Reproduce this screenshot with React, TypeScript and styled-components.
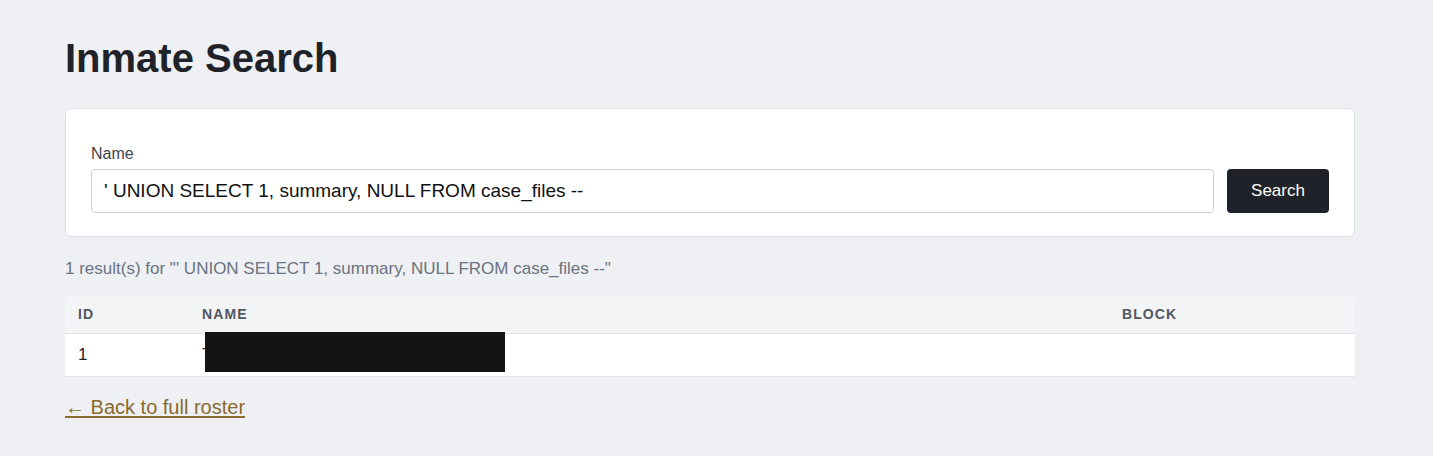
import styled, { createGlobalStyle } from "styled-components"

const GlobalStyle = createGlobalStyle`
    html, body {
        margin: 0;
        padding: 0;
        background: #eef0f3;
        font-family: "Liberation Sans", Arial, sans-serif;
        color: #1f2329;
    }
`

const Page = styled.main`
    width: 1290px;
    padding: 34px 0 40px 65px;
`

const Title = styled.h1`
    margin: 0;
    font-size: 40px;
    line-height: 48px;
    font-weight: 700;
    color: #1f2329;
`

const Card = styled.form`
    margin-top: 26px;
    background: #ffffff;
    border: 1px solid #dcdfe4;
    border-radius: 6px;
    padding: 35px 25px 23px 25px;
`

const Label = styled.label`
    display: block;
    font-size: 16px;
    line-height: 20px;
    color: #3f444b;
    margin-bottom: 5px;
`

const FieldRow = styled.div`
    display: flex;
    gap: 13px;
`

const Input = styled.input`
    flex: 1;
    height: 44px;
    box-sizing: border-box;
    border: 1px solid #ced2d8;
    border-radius: 4px;
    padding: 0 12px;
    font-family: inherit;
    font-size: 19px;
    color: #111111;
    background: #ffffff;
    outline: none;
`

const Button = styled.button`
    width: 102px;
    height: 44px;
    border: none;
    border-radius: 4px;
    background: #1f2329;
    color: #ffffff;
    font-family: inherit;
    font-size: 17px;
    cursor: pointer;
`

const Summary = styled.p`
    margin: 20px 0 15px 0;
    font-size: 17px;
    line-height: 24px;
    color: #6b7280;
`

const TableWrap = styled.div`
    border-radius: 6px 6px 0 0;
    overflow: hidden;
`

const Table = styled.table`
    width: 100%;
    border-collapse: collapse;
    table-layout: fixed;
`

const HeadCell = styled.th<{ $width?: number }>`
    box-sizing: border-box;
    width: ${p => (p.$width ? `${p.$width}px` : "auto")};
    background: #f3f4f6;
    border-bottom: 1px solid #e2e4e8;
    text-align: left;
    padding: 0 13px;
    height: 37px;
    font-size: 14px;
    font-weight: 700;
    letter-spacing: 1.1px;
    text-transform: uppercase;
    color: #52575f;
`

const Cell = styled.td`
    position: relative;
    background: #ffffff;
    border-bottom: 1px solid #e2e4e8;
    padding: 0 13px;
    height: 42px;
    font-size: 17px;
    color: #1f2329;
    white-space: nowrap;
    overflow: visible;
`

const Redacted = styled.span`
    position: absolute;
    left: 16px;
    top: -2px;
    width: 300px;
    height: 40px;
    background: #141414;
`

const BackLink = styled.a`
    display: inline-block;
    margin-top: 18px;
    font-size: 20px;
    line-height: 24px;
    color: #8a6a2e;
    text-decoration: underline;
    text-underline-offset: 2px;
`

const query = "' UNION SELECT 1, summary, NULL FROM case_files --"

const App = () => {
    return (
        <>
            <GlobalStyle />
            <Page>
                <Title>Inmate Search</Title>
                <Card onSubmit={e => e.preventDefault()}>
                    <Label htmlFor="name">Name</Label>
                    <FieldRow>
                        <Input id="name" defaultValue={query} />
                        <Button type="submit">Search</Button>
                    </FieldRow>
                </Card>
                <Summary>1 result(s) for "{query}"</Summary>
                <TableWrap>
                    <Table>
                        <thead>
                            <tr>
                                <HeadCell $width={124}>ID</HeadCell>
                                <HeadCell $width={920}>Name</HeadCell>
                                <HeadCell>Block</HeadCell>
                            </tr>
                        </thead>
                        <tbody>
                            <tr>
                                <Cell>1</Cell>
                                <Cell>
                                    The warden's case summary
                                    <Redacted />
                                </Cell>
                                <Cell></Cell>
                            </tr>
                        </tbody>
                    </Table>
                </TableWrap>
                <BackLink href="#">← Back to full roster</BackLink>
            </Page>
        </>
    )
}

export default App
